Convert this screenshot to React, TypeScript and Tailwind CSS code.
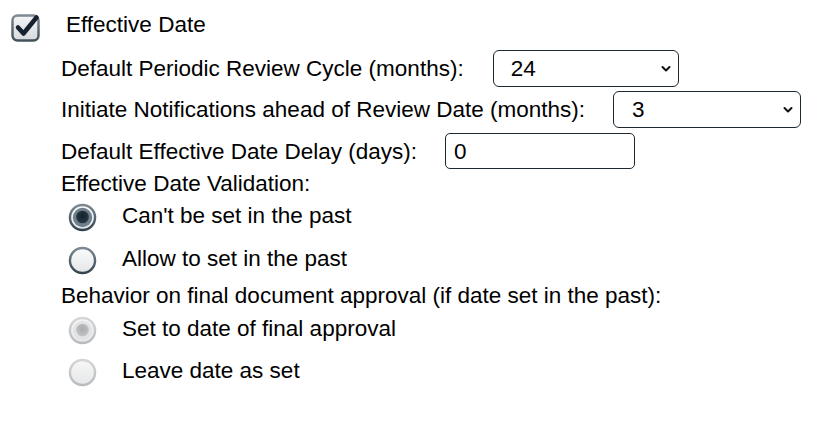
import React from "react";

function CheckIcon() {
  return (
    <svg width="30" height="30" viewBox="0 0 30 30">
      <defs>
        <linearGradient id="cbBorder" x1="0" y1="0" x2="0" y2="1">
          <stop offset="0" stopColor="#7f8a93" />
          <stop offset="1" stopColor="#43515b" />
        </linearGradient>
        <linearGradient id="cbFill" x1="0" y1="0" x2="0" y2="1">
          <stop offset="0" stopColor="#f4f5f6" />
          <stop offset="1" stopColor="#d6dadd" />
        </linearGradient>
      </defs>
      <rect x="1.5" y="3.5" width="26" height="25" rx="5" fill="url(#cbFill)" stroke="url(#cbBorder)" strokeWidth="2.5" />
      <path d="M7 15.5 L12.5 21.5 L25.5 5.5" fill="none" stroke="#16232e" strokeWidth="4.5" strokeLinecap="round" strokeLinejoin="round" />
    </svg>
  );
}

function Radio({ checked, disabled }: { checked?: boolean; disabled?: boolean }) {
  const id = `${checked ? "c" : "u"}${disabled ? "d" : "e"}`;
  const ring = disabled ? ["#d4d6d8", "#b8bbbe"] : ["#7d8a94", "#34444f"];
  const fill = disabled ? ["#f7f7f7", "#e6e7e8"] : ["#fbfbfb", "#e3e6e8"];
  const dot = disabled ? "#c2c4c6" : "#2a3a46";
  return (
    <svg width="29" height="29" viewBox="0 0 30 30">
      <defs>
        <linearGradient id={`r${id}`} x1="0" y1="0" x2="0" y2="1">
          <stop offset="0" stopColor={ring[0]} />
          <stop offset="1" stopColor={ring[1]} />
        </linearGradient>
        <linearGradient id={`f${id}`} x1="0" y1="0" x2="0" y2="1">
          <stop offset="0" stopColor={fill[0]} />
          <stop offset="1" stopColor={fill[1]} />
        </linearGradient>
        <radialGradient id={`d${id}`} cx="0.5" cy="0.4" r="0.6">
          <stop offset="0" stopColor={disabled ? "#a9acaf" : "#15222c"} />
          <stop offset="1" stopColor={dot} />
        </radialGradient>
      </defs>
      <circle cx="15" cy="15" r="13" fill={`url(#f${id})`} stroke={`url(#r${id})`} strokeWidth="2.5" />
      {checked && (
        <>
          <circle cx="15" cy="15" r="10" fill={disabled ? "#e2e3e4" : "#6f7f8b"} />
          <circle cx="15" cy="14.5" r="6.5" fill={`url(#d${id})`} />
        </>
      )}
    </svg>
  );
}

function Chevron() {
  return (
    <svg width="10" height="7" viewBox="0 0 10 7" className="absolute right-[7px] top-1/2 -translate-y-1/2">
      <path d="M1.5 1.5 L5 5 L8.5 1.5" fill="none" stroke="#111" strokeWidth="2" strokeLinecap="round" strokeLinejoin="round" />
    </svg>
  );
}

export default function App() {
  return (
    <main
      className="w-[831px] h-[422px] bg-white text-black text-[22.5px] leading-[25px] pt-[12px]"
      style={{ fontFamily: '"Liberation Sans", Arial, sans-serif' }}
    >
      <div className="flex items-center h-[30px] pl-[11px]">
        <CheckIcon />
        <span className="ml-[25px] mb-[5px]">Effective Date</span>
      </div>

      <div className="pl-[61px]">
        <div className="flex items-center h-[37px] mt-[8px]">
          <span>Default Periodic Review Cycle (months):</span>
          <div className="relative ml-[29px] h-[37px] w-[186px] rounded-[6px] border border-[#1b2731] bg-white flex items-center pl-[17px]">
            <span>24</span>
            <Chevron />
          </div>
        </div>
        <div className="flex items-center h-[37px] mt-[4px]">
          <span>Initiate Notifications ahead of Review Date (months):</span>
          <div className="relative ml-[28px] h-[37px] w-[188px] rounded-[6px] border border-[#1b2731] bg-white flex items-center pl-[18px]">
            <span>3</span>
            <Chevron />
          </div>
        </div>
        <div className="flex items-center h-[36px] mt-[5px]">
          <span>Default Effective Date Delay (days):</span>
          <div className="ml-[28px] h-[36px] w-[190px] rounded-[5px] border border-[#1b2731] bg-white flex items-center pl-[8px]">
            <span>0</span>
          </div>
        </div>
        <div className="flex items-center h-[24px] mt-[2px]">Effective Date Validation:</div>

        <div className="flex items-center h-[42px] pl-[7px] mt-[1px]">
          <Radio checked />
          <span className="ml-[25px] mb-[4px]">Can't be set in the past</span>
        </div>
        <div className="flex items-center h-[42px] pl-[7px] mt-[1px]">
          <Radio />
          <span className="ml-[25px] mb-[4px]">Allow to set in the past</span>
        </div>
        <div className="flex items-center h-[24px] mt-[2px]">Behavior on final document approval (if date set in the past):</div>
        <div className="flex items-center h-[42px] pl-[7px] mt-[2px]">
          <Radio checked disabled />
          <span className="ml-[25px] mb-[4px]">Set to date of final approval</span>
        </div>
        <div className="flex items-center h-[42px] pl-[7px]">
          <Radio disabled />
          <span className="ml-[25px] mb-[4px]">Leave date as set</span>
        </div>
      </div>
    </main>
  );
}
